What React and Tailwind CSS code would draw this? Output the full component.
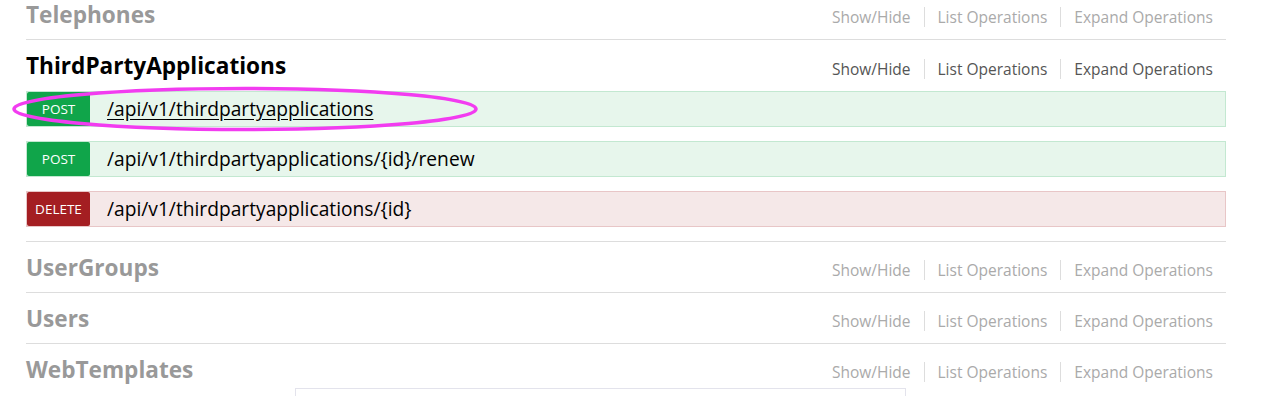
import React from "react";

const font = { fontFamily: '"Open Sans", "DejaVu Sans", sans-serif' };

function Options({ active }) {
  const c = active ? "text-[#555555]" : "text-[#aaaaaa]";
  return (
    <ul className={`flex items-center mt-[6px] text-[15.5px] ${c}`}>
      <li className="px-[13px] border-r border-[#dddddd] leading-[20px]">Show/Hide</li>
      <li className="px-[13px] border-r border-[#dddddd] leading-[20px]">List Operations</li>
      <li className="pl-[13px] pr-[13px] leading-[20px]">Expand Operations</li>
    </ul>
  );
}

function Heading({ title, active }) {
  return (
    <div className={`${active ? "h-[51px]" : "h-[50px]"} flex items-center justify-between`}>
      <h2
        className={`text-[22.6px] font-bold leading-none pt-[2px] ${active ? "text-black" : "text-[#999999]"}`}
      >
        {title}
      </h2>
      <Options active={active} />
    </div>
  );
}

function Endpoint({ method, path, underline }) {
  const isDelete = method === "DELETE";
  return (
    <li
      className={`h-[36px] mb-[14px] flex items-center border ${
        isDelete ? "bg-[#f5e8e8] border-[#e8c6c7]" : "bg-[#e7f6ec] border-[#c3e8d1]"
      }`}
    >
      <span
        className={`w-[63px] h-[34px] flex items-center justify-center rounded-[2px] text-white text-[13.5px] ${
          isDelete ? "bg-[#a41e22]" : "bg-[#10a54a]"
        }`}
      >
        {method}
      </span>
      <span className={`ml-[17px] text-[19.2px] text-black ${underline ? "underline underline-offset-[3px]" : ""}`}>
        {path}
      </span>
    </li>
  );
}

export default function App() {
  return (
    <div className="relative w-[1264px] h-[396px] overflow-hidden bg-white" style={font}>
      <ul className="w-[1200px] ml-[26px] -mt-[11px]">
        <li className="border-b border-[#dddddd]">
          <Heading title="Telephones" />
        </li>
        <li className="border-b border-[#dddddd]">
          <Heading title="ThirdPartyApplications" active />
          <ul>
            <Endpoint method="POST" path="/api/v1/thirdpartyapplications" underline />
            <Endpoint method="POST" path="/api/v1/thirdpartyapplications/{id}/renew" />
            <Endpoint method="DELETE" path="/api/v1/thirdpartyapplications/{id}" />
          </ul>
        </li>
        <li className="border-b border-[#dddddd]">
          <Heading title="UserGroups" />
        </li>
        <li className="border-b border-[#dddddd]">
          <Heading title="Users" />
        </li>
        <li>
          <Heading title="WebTemplates" />
        </li>
      </ul>
      <div className="absolute left-[295px] top-[388px] w-[611px] h-[40px] border border-[#e3e3ec] bg-white" />
      <svg className="absolute left-0 top-0 pointer-events-none" width="1264" height="396">
        <ellipse cx="245" cy="109" rx="231" ry="20.5" fill="none" stroke="#f23cf0" strokeWidth="3.5" />
      </svg>
    </div>
  );
}
